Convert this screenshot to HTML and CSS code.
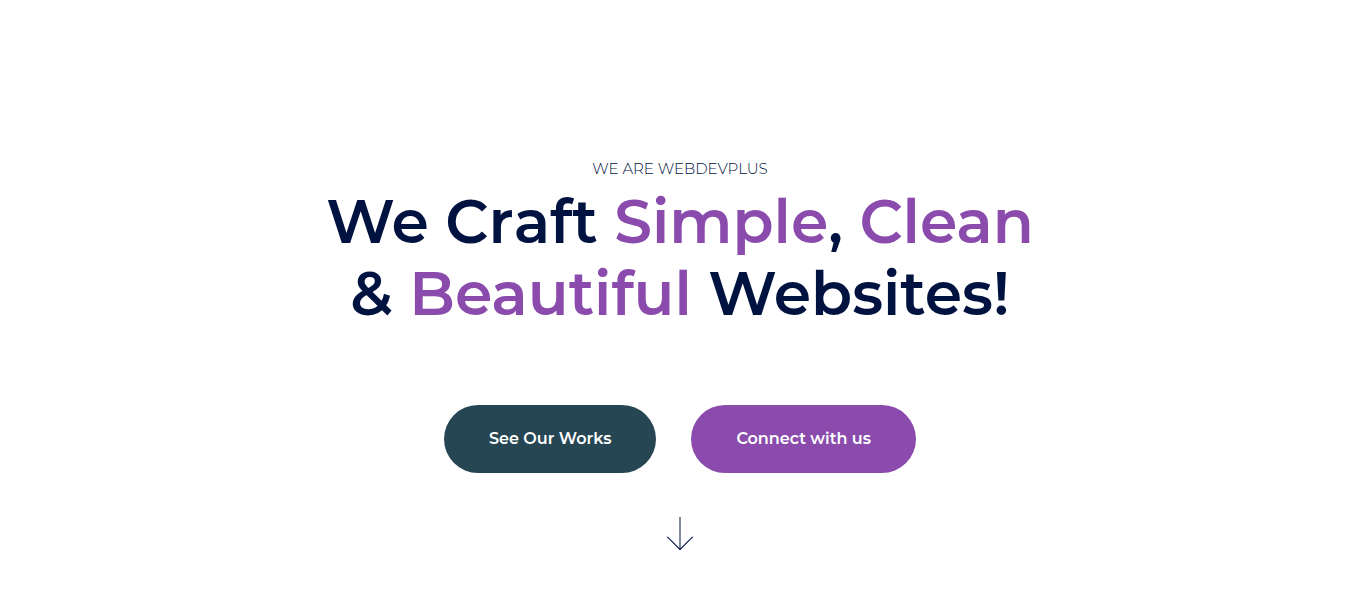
FILE: index.html
```html
<!DOCTYPE html>
<html lang="en">
<head>
<meta charset="utf-8">
<title>WebDevPlus</title>
<link rel="stylesheet" href="styles.css">
</head>
<body>
<main class="hero">
  <p class="eyebrow">WE ARE WEBDEVPLUS</p>
  <h1 class="title">
    <span class="line">We C<span class="unkerned">r</span>aft <em>Simple</em>, <em>Clean</em></span>
    <span class="line">&amp; <em>Beautiful</em> Websites!</span>
  </h1>
  <div class="actions">
    <a class="button works" href="#works">See Our Works</a>
    <a class="button connect" href="#contact">Connect with us</a>
  </div>
  <a class="scroll" href="#works" aria-label="Scroll down">
    <svg width="26" height="34" viewBox="0 0 26 34"><path d="M13 0V33"/><path class="head" d="M0.3 19.8L13 32.5L25.7 19.8"/></svg>
  </a>
</main>
</body>
</html>
```
FILE: styles.css
```css
body { margin: 0; background: #fff; font-family: Montserrat, Inter, sans-serif; }
.hero { display: flex; flex-direction: column; align-items: center; height: 600px; box-sizing: border-box; padding-top: 157px; overflow: hidden; }
.eyebrow { margin: 0; font-size: 15px; line-height: 24px; font-weight: 300; color: #001240; white-space: nowrap; }
.title { margin: 5px 0 0; font-size: 60px; line-height: 72px; font-weight: 600; color: #001240; text-align: center; }
.line { display: block; white-space: nowrap; }
.unkerned { font-kerning: none; }
.title em { font-style: normal; color: #8a4bad; }
.actions { display: flex; gap: 35px; margin-top: 75px; }
.button { height: 68px; padding: 0 45px; border-radius: 34px; line-height: 67px; color: #fff; font-size: 16px; font-weight: 600; text-decoration: none; white-space: nowrap; }
.works { background: #264653; }
.connect { background: #8a4bad; }
.scroll { margin-top: 44px; height: 34px; }
.scroll svg { display: block; fill: none; stroke: #001240; stroke-width: 1; }
.scroll .head { stroke-width: 1.1; }
```
